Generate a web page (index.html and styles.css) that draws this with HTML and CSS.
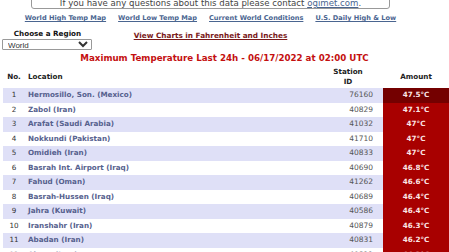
FILE: index.html
```html
<!doctype html>
<html>
    <head>
        <title>Maximum Temperature</title>
        <link rel="stylesheet" href="styles.css">
    </head>
    <body>
        <div class="top">
            <div class="notice">If you have any questions about this data please contact <a href="#">ogimet.com</a>.</div>

            <div class="links">
                <a href="#">World High Temp Map</a>
                <a href="#">World Low Temp Map</a>
                <a href="#">Current World Conditions</a>
                <a href="#">U.S. Daily High &amp; Low</a>
            </div>

            <div class="controls">
                <div class="region">
                    <div class="region-label">Choose a Region</div>
                    <select class="region-select">
                        <option>World</option>
                    </select>
                </div>
                <a class="charts-link" href="#">View Charts in Fahrenheit and Inches</a>
                <div></div>
            </div>
        </div>

        <h1 class="title">Maximum Temperature Last 24h - 06/17/2022 at 02:00 UTC</h1>

        <table class="temps">
            <thead>
                <tr>
                    <th class="col-no">No.</th>
                    <th class="col-loc">Location</th>
                    <th class="col-id">Station<br>ID</th>
                    <th class="col-amt">Amount</th>
                </tr>
            </thead>
            <tbody>
                <tr><td class="col-no">1</td><td class="col-loc">Hermosillo, Son. (Mexico)</td><td class="col-id">76160</td><td class="col-amt top-amt">47.5°C</td></tr>
                <tr><td class="col-no">2</td><td class="col-loc">Zabol (Iran)</td><td class="col-id">40829</td><td class="col-amt">47.1°C</td></tr>
                <tr><td class="col-no">3</td><td class="col-loc">Arafat (Saudi Arabia)</td><td class="col-id">41032</td><td class="col-amt">47°C</td></tr>
                <tr><td class="col-no">4</td><td class="col-loc">Nokkundi (Pakistan)</td><td class="col-id">41710</td><td class="col-amt">47°C</td></tr>
                <tr><td class="col-no">5</td><td class="col-loc">Omidieh (Iran)</td><td class="col-id">40833</td><td class="col-amt">47°C</td></tr>
                <tr><td class="col-no">6</td><td class="col-loc">Basrah Int. Airport (Iraq)</td><td class="col-id">40690</td><td class="col-amt">46.8°C</td></tr>
                <tr><td class="col-no">7</td><td class="col-loc">Fahud (Oman)</td><td class="col-id">41262</td><td class="col-amt">46.6°C</td></tr>
                <tr><td class="col-no">8</td><td class="col-loc">Basrah-Hussen (Iraq)</td><td class="col-id">40689</td><td class="col-amt">46.4°C</td></tr>
                <tr><td class="col-no">9</td><td class="col-loc">Jahra (Kuwait)</td><td class="col-id">40586</td><td class="col-amt">46.4°C</td></tr>
                <tr><td class="col-no">10</td><td class="col-loc">Iranshahr (Iran)</td><td class="col-id">40879</td><td class="col-amt">46.3°C</td></tr>
                <tr><td class="col-no">11</td><td class="col-loc">Abadan (Iran)</td><td class="col-id">40831</td><td class="col-amt">46.2°C</td></tr>
                <tr><td class="col-no">12</td><td class="col-loc">Ahvaz (Iran)</td><td class="col-id">40811</td><td class="col-amt">46.2°C</td></tr>
            </tbody>
        </table>
    </body>
</html>
```

FILE: styles.css
```css
body {
    margin: 0;
    font-family: "DejaVu Sans", Verdana, sans-serif;
    font-size: 7.2px;
    color: #222;
    background-color: #fff;
    overflow: hidden;
}

.top {
    width: 421px;
}

.notice {
    width: 345px;
    margin: -4px auto 0;
    padding: 1px 6px 0;
    border: 1px solid #999;
    border-radius: 3px;
    color: #444;
    text-align: center;
    line-height: 10px;
    font-size: 8.6px;
    white-space: nowrap;
}

.notice a {
    color: #4a6590;
}

.links {
    display: flex;
    justify-content: center;
    gap: 12px;
    margin-top: 4px;
    line-height: 10px;
    font-size: 6.6px;
    white-space: nowrap;
}

.links a {
    color: #4a6590;
    font-weight: bold;
}

.controls {
    display: grid;
    grid-template-columns: 95px 1fr 95px;
    align-items: start;
    margin-top: 6px;
}

.region {
    text-align: center;
}

.region-label {
    font-weight: bold;
    color: #111;
    line-height: 10px;
}

.region-select {
    display: block;
    width: 90px;
    height: 11px;
    margin: 0 0 0 2px;
    padding: 0 0 0 1px;
    font-family: "Liberation Sans", Arial, sans-serif;
    font-size: 8px;
    color: #333;
    border: 1px solid #999;
    border-radius: 1px;
    background-color: #fff;
}

.charts-link {
    justify-self: center;
    margin-top: 2px;
    line-height: 10px;
    color: #7a1a1a;
    font-weight: bold;
    font-size: 7.3px;
    white-space: nowrap;
}

.title {
    margin: 1px 0 0;
    text-align: center;
    font-size: 8.7px;
    color: #c41010;
    line-height: 14px;
}

.temps {
    width: 446px;
    margin-left: 3px;
    border-collapse: collapse;
}

.temps th {
    height: 23px;
    padding: 0;
    font-weight: bold;
    color: #222;
    line-height: 10px;
}

.temps td {
    height: 14.5px;
    padding: 0;
    line-height: 10px;
}

.temps tbody tr:nth-child(odd) {
    background-color: #dfe0f7;
}

.col-no {
    width: 22px;
    text-align: center;
}

.temps td.col-no {
    color: #333;
}

.col-loc {
    text-align: left;
    padding-left: 3px !important;
}

.temps td.col-loc {
    color: #56618e;
    font-weight: bold;
}

.col-id {
    width: 60px;
    text-align: center;
}

.temps td.col-id {
    text-align: right;
    padding-right: 10px;
    color: #555;
    font-size: 7.5px;
}

.col-amt {
    width: 66px;
    text-align: center;
}

.temps td.col-amt {
    background-color: #a80000;
    color: #fbe6e6;
    font-weight: bold;
}

.temps td.top-amt {
    background-color: #740000;
}
```
